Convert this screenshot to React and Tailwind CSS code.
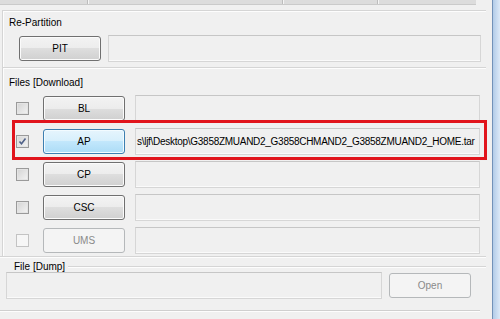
const PATH_TEXT = "s\\ljf\\Desktop\\G3858ZMUAND2_G3858CHMAND2_G3858ZMUAND2_HOME.tar";

const rows = [
  { label: "BL", checked: false, state: "normal", value: "" },
  { label: "AP", checked: true, state: "hot", value: PATH_TEXT },
  { label: "CP", checked: false, state: "normal", value: "" },
  { label: "CSC", checked: false, state: "normal", value: "" },
  { label: "UMS", checked: false, state: "disabled", value: "" },
];

function Button({ children, state = "normal", className = "" }) {
  let look =
    "border-[#707070] text-black bg-[linear-gradient(#f3f3f3_0%,#ececec_50%,#dedede_50%,#d0d0d0_100%)] shadow-[inset_0_0_0_1px_#fbfbfb]";
  if (state === "hot")
    look =
      "border-[#3c7fb1] text-black bg-[linear-gradient(#e6f5fd_0%,#d6effc_50%,#c2e7fc_50%,#acdcf6_100%)] shadow-[inset_0_0_0_1px_#f2fbff]";
  if (state === "disabled") look = "border-[#b5b8ba] text-[#8a8a8a] bg-[#f4f4f4]";
  return (
    <div className={`h-[25px] w-[82px] shrink-0 flex items-center justify-center border rounded-[3px] ${look} ${className}`}>
      {children}
    </div>
  );
}

function Checkbox({ checked, disabled }) {
  return (
    <div
      className={`w-[13px] h-[13px] shrink-0 border flex items-center justify-center ${
        disabled
          ? "border-[#c3c3c3] bg-[#f6f6f6]"
          : "border-[#9a9a9a] bg-[linear-gradient(135deg,#d3d3d3,#f4f4f4)] shadow-[inset_0_0_0_1px_#e4e4e4]"
      }`}
    >
      {checked && (
        <svg width="9" height="9" viewBox="0 0 9 9">
          <polyline points="1.5,4.5 3.5,6.8 7.5,1.5" fill="none" stroke="#4f6188" strokeWidth="1.6" />
        </svg>
      )}
    </div>
  );
}

function Field({ className = "", children }) {
  return (
    <div
      className={`h-[27px] shrink-0 flex items-center border border-[#d6d6d6] border-t-[#c6c6c6] bg-[#f0f0f0] shadow-[inset_0_-1px_0_#fafafa] overflow-hidden whitespace-nowrap ${className}`}
    >
      {children}
    </div>
  );
}

export default function App() {
  return (
    <div className="w-[500px] h-[319px] flex overflow-hidden bg-[#f0f0f0] text-[10px] leading-[12px] text-black font-['Liberation_Sans',Arial,sans-serif]">
      <div className="relative w-[492px] h-full">
        {/* bottom of the control above */}
        <div className="flex h-[5px] w-[476px] bg-[#dcdcdc] border-b border-[#cacaca]">
          <div className="w-[88px] border-r border-[#bdbdbd] shadow-[1px_0_0_#f5f5f5]" />
          <div className="w-[195px] border-r border-[#bdbdbd] shadow-[1px_0_0_#f5f5f5]" />
          <div className="w-[95px] border-r border-[#bdbdbd] shadow-[1px_0_0_#f5f5f5]" />
          <div className="flex-1" />
        </div>

        {/* Re-Partition */}
        <section className="mt-[5px] ml-[2px] w-[484px] h-[57px] border-t border-l border-[#d5d5d5] shadow-[inset_1px_1px_0_#fdfdfd]">
          <div className="pt-[6px] pl-[6px]">Re-Partition</div>
          <div className="mt-[6px] flex items-center">
            <Button className="ml-[16px]">PIT</Button>
            <Field className="ml-[7px] w-[373px] border-t-[#8497aa]" />
          </div>
        </section>

        {/* Files [Download] */}
        <section className="ml-[2px] w-[484px] h-[189px] border-t border-l border-[#d5d5d5] shadow-[inset_1px_1px_0_#fdfdfd]">
          <div className="pt-[9px] pl-[6px]">Files [Download]</div>
          <div className="mt-[6px] flex flex-col gap-[6px]">
            {rows.map((r) => (
              <div key={r.label} className="flex items-center h-[27px]">
                <div className="ml-[13px]">
                  <Checkbox checked={r.checked} disabled={r.state === "disabled"} />
                </div>
                <Button state={r.state} className="ml-[14px]">
                  {r.label}
                </Button>
                <Field className="ml-[10px] w-[345px] pl-[1px]">
                  <span className="tracking-[-0.28px]">{r.value}</span>
                </Field>
              </div>
            ))}
          </div>
        </section>

        {/* File [Dump] */}
        <section className="w-[486px] border-t border-[#d5d5d5] shadow-[inset_0_1px_0_#fdfdfd]">
          <div className="pt-[4px] h-[15px] flex">
            <span className="pl-[14px] pr-[3px]">File [Dump]</span>
            <div className="flex-1 mt-[5px] h-0 border-t border-[#d5d5d5] shadow-[0_1px_0_#fdfdfd]" />
          </div>
          <div className="flex items-center h-[27px]">
            <Field className="ml-[6px] w-[376px]" />
            <Button state="disabled" className="ml-[7px]">
              Open
            </Button>
          </div>
          <div className="mt-[11px] w-[480px] border-t border-[#cfcfcf] shadow-[0_1px_0_#fdfdfd]" />
        </section>

        {/* annotation */}
        <div className="absolute left-[12px] top-[120px] w-[475px] h-[40px] border-[3px] border-[#e1141c]" />
      </div>
      <div className="w-[8px] h-full border-l border-[#7392b8] bg-gradient-to-r from-[#b3cce8] to-[#dce9f7]" />
    </div>
  );
}
